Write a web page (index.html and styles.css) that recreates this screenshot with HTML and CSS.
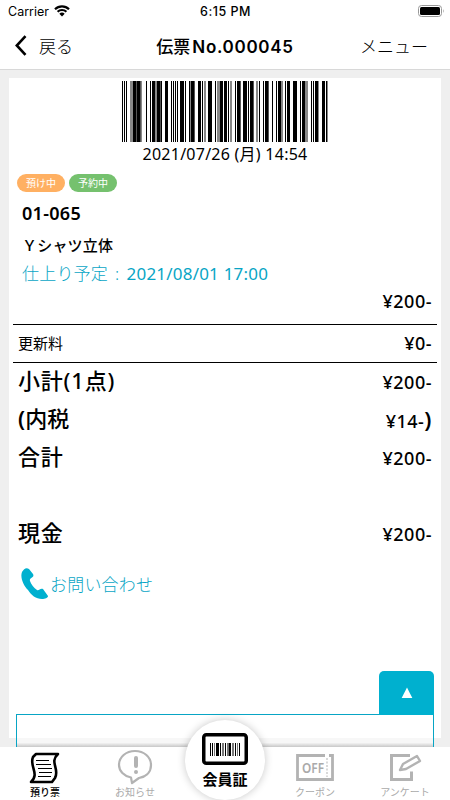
FILE: index.html
```html
<!DOCTYPE html>
<html lang="ja">
  <head>
    <meta charset="UTF-8" />
    <meta name="viewport" content="width=device-width, initial-scale=1.0" />
    <title>伝票No.000045</title>
    <link rel="stylesheet" href="styles.css">
  </head>
  <body>
    <header class="header">
      <div class="status">
        <div class="carrier">
          <span>Carrier</span>
          <svg class="wifi" viewBox="0 0 16 12">
            <path d="M1 4.2a10 10 0 0 1 14 0M3.6 6.8a6.3 6.3 0 0 1 8.8 0" fill="none" stroke="#000" stroke-width="2.2" />
            <path d="M5.3 8.8a4 4 0 0 1 5.4 0L8 11.5z" />
          </svg>
        </div>
        <div class="time">6:15 PM</div>
        <svg class="battery" viewBox="0 0 27 12">
          <rect x=".5" y=".5" width="23" height="11" rx="3" fill="none" stroke="#999" />
          <rect x="2" y="2" width="20" height="8" rx="1.5" />
          <path d="M25 4q1.5 2 0 4z" fill="#999" />
        </svg>
      </div>
      <nav class="nav">
        <a class="back">
          <svg class="chevron" viewBox="0 0 12 21"><path d="M10.5 1.2L1.8 10.5l8.7 9.3" /></svg>
          <span>戻る</span>
        </a>
        <h1 class="title">伝票<span>No.000045</span></h1>
        <a class="menu">メニュー</a>
      </nav>
    </header>

    <main class="main">
      <section class="slip">
        <svg class="barcode" viewBox="0 0 208 61" shape-rendering="crispEdges">
          <path d="M1 0h1v61h-1zM3 0h1v61h-1zM5 0h1v61h-1zM12 0h3v61h-3zM16 0h3v61h-3zM25 0h1v61h-1zM29 0h1v61h-1zM31 0h3v61h-3zM36 0h3v61h-3zM40 0h1v61h-1zM44 0h3v61h-3zM50 0h1v61h-1zM52 0h1v61h-1zM54 0h1v61h-1zM56 0h1v61h-1zM59 0h4v61h-4zM64 0h1v61h-1zM68 0h1v61h-1zM70 0h3v61h-3zM77 0h3v61h-3zM81 0h1v61h-1zM87 0h4v61h-4zM94 0h1v61h-1zM99 0h3v61h-3zM103 0h3v61h-3zM107 0h1v61h-1zM114 0h1v61h-1zM116 0h3v61h-3zM122 0h4v61h-4zM127 0h1v61h-1zM129 0h3v61h-3zM138 0h1v61h-1zM142 0h1v61h-1zM144 0h3v61h-3zM151 0h1v61h-1zM155 0h1v61h-1zM157 0h3v61h-3zM164 0h1v61h-1zM166 0h3v61h-3zM172 0h4v61h-4zM179 0h1v61h-1zM181 0h3v61h-3zM190 0h1v61h-1zM192 0h1v61h-1zM194 0h3v61h-3zM201 0h3v61h-3zM205 0h1v61h-1z" />
          <path d="M9 0h3v61h-3zM20 0h1v61h-1zM34 0h2v61h-2zM69 0h1v61h-1zM83 0h2v61h-2zM96 0h3v61h-3zM109 0h2v61h-2zM135 0h2v61h-2zM160 0h2v61h-2zM184 0h3v61h-3zM197 0h1v61h-1zM206 0h1v61h-1z" fill="#888" />
          <path d="M15 0h1v61h-1zM19 0h1v61h-1zM39 0h1v61h-1zM73 0h1v61h-1zM119 0h1v61h-1zM132 0h1v61h-1zM147 0h1v61h-1z" fill="#555" />
        </svg>
        <p class="issued">2021/07/26 (月) 14:54</p>

        <div class="badges">
          <span class="badge badge-orange">預け中</span>
          <span class="badge badge-green">予約中</span>
        </div>
        <p class="number">01-065</p>
        <p class="item">Ｙシャツ立体</p>
        <p class="due"><span class="due-label">仕上り予定 : </span>2021/08/01 17:00</p>
        <p class="price">¥200-</p>

        <div class="row row-fee">
          <span>更新料</span>
          <span class="price">¥0-</span>
        </div>
        <div class="row">
          <span class="label">小計(1点)</span>
          <span class="price">¥200-</span>
        </div>
        <div class="row">
          <span class="label label-tax"><b>(</b>内税</span>
          <span class="price">¥14-<b>)</b></span>
        </div>
        <div class="row">
          <span class="label">合計</span>
          <span class="price">¥200-</span>
        </div>
        <div class="row row-cash">
          <span class="label">現金</span>
          <span class="price">¥200-</span>
        </div>

        <a class="contact">
          <svg class="phone" viewBox="0 0 27 31">
            <path d="M1 4C3 1 5-1 8 1l4 5c2 4-4 3-3 7 1 3 4 7 7 9 2 1 3-2 6-1l5 7c0 2-3 3-6 3-6 0-11-4-14-9C2 17-1 9 1 4z" />
          </svg>
          <span>お問い合わせ</span>
        </a>
      </section>
    </main>

    <div class="drawer">
      <button class="drawer-tab">
        <svg viewBox="0 0 12 12"><path d="M6 .5l5.300 10.500H.7z" /></svg>
      </button>
    </div>

    <footer class="tabs">
      <a class="tab active">
        <svg class="icon" viewBox="0 0 38 36">
          <path d="M10 5h22c-9 8 2 15-3 24l-3 4H5c9-8-2-16 2-25z" fill="none" stroke="#000" stroke-width="2.6" stroke-linejoin="round" />
          <path d="M10 11.500h13M10 15.500h15M12 19.500h14M13 23.500h13M12 27.500h13" stroke="#000" stroke-width="1" />
        </svg>
        <span>預り票</span>
      </a>
      <a class="tab">
        <svg class="icon" viewBox="0 0 38 36">
          <path d="M15 28.5C8 27 3 22 3 16 3 8 10 2 19 2s16 6 16 14-6 12-12 13l-7 5z" fill="none" stroke="#b3b3b3" stroke-width="2.2" stroke-linejoin="round" />
          <path d="M20 9v8" stroke="#b3b3b3" stroke-width="4" stroke-linecap="round" />
          <circle cx="20" cy="23" r="2" fill="#b3b3b3" />
        </svg>
        <span>お知らせ</span>
      </a>
      <a class="card">
        <svg class="card-icon" viewBox="0 0 46 32">
          <rect x="1.75" y="1.75" width="42.5" height="28.5" rx="2.5" fill="none" stroke="#000" stroke-width="3.5" />
          <g shape-rendering="crispEdges">
            <path d="M8 10h1v13H8zM10 10h1v13h-1zM14 10h3v13h-3zM18 10h1v13h-1zM23 10h1v13h-1zM27 10h2v13h-2zM33 10h1v13h-1zM37 10h1v13h-1z" />
            <path d="M12 10h1v13h-1zM20 10h2v13h-2zM25 10h2v13h-2zM30 10h2v13h-2zM35 10h1v13h-1z" fill="#777" />
          </g>
        </svg>
        <span>会員証</span>
      </a>
      <a class="tab">
        <svg class="icon" viewBox="0 0 38 36">
          <path d="M29 6.500H1.500v24h35v-24H33" fill="none" stroke="#b3b3b3" stroke-width="2.8" />
          <path d="M31 9v19" stroke="#b3b3b3" stroke-dasharray="2 1.5" />
          <text class="off" x="6" y="23.5" textLength="22" lengthAdjust="spacingAndGlyphs">OFF</text>
        </svg>
        <span>クーポン</span>
      </a>
      <a class="tab">
        <svg class="icon" viewBox="0 0 38 36">
          <path d="M24 6.500H5.500v24h20v-8" fill="none" stroke="#b3b3b3" stroke-width="3" />
          <path d="M14 21l3-6L31 7l3 5-14 8z" fill="none" stroke="#b3b3b3" stroke-width="2.4" stroke-linejoin="round" />
        </svg>
        <span>アンケート</span>
      </a>
    </footer>
  </body>
</html>
```
FILE: styles.css
```css
* {
  box-sizing: border-box;
}
html,
body {
  height: 100%;
  margin: 0;
}
body {
  display: flex;
  flex-direction: column;
  position: relative;
  overflow: hidden;
  background: #efefef;
  color: #000;
  font-family: 'Noto Sans', 'Noto Sans CJK JP', sans-serif;
}
p,
h1 {
  margin: 0;
}
svg {
  display: block;
}
.header {
  height: 70px;
  background: #fff;
  border-bottom: 1px solid #d8d8d8;
}
.status {
  display: grid;
  grid-template-columns: 1fr 1fr 1fr;
  align-items: center;
  height: 22px;
  padding: 0 5px 0 8px;
  font: 12.5px Inter, sans-serif;
}
.carrier {
  display: flex;
  align-items: center;
  gap: 5px;
}
.wifi {
  width: 16px;
  height: 12px;
}
.time {
  margin-left: -2px;
  text-align: center;
  font-weight: 500;
  letter-spacing: 0.5px;
}
.battery {
  justify-self: end;
  width: 27px;
  height: 12px;
}
.nav {
  display: grid;
  grid-template-columns: 1fr auto 1fr;
  align-items: center;
  height: 46px;
  padding: 0 22px 0 15px;
  font-family: Inter, 'Noto Sans CJK JP', sans-serif;
  font-size: 17px;
  font-weight: 300;
}
.back {
  display: flex;
  align-items: center;
  gap: 12px;
}
.chevron {
  width: 12px;
  height: 21px;
  fill: none;
  stroke: #000;
  stroke-width: 2.6;
}
.title {
  margin-left: 7px;
  font-size: 17px;
  font-weight: 500;
}
.title span {
  margin-left: 2px;
  font-weight: 600;
  letter-spacing: 0.7px;
}
.menu {
  text-align: right;
}
.main {
  flex: 1;
  padding: 8px 9px 0;
}
.slip {
  height: 660px;
  padding: 3px 4px 0;
  background: #fff;
}
.barcode {
  width: 208px;
  height: 61px;
  margin: 0 auto;
}
.issued {
  height: 32px;
  line-height: 25px;
  text-align: center;
  font-size: 16px;
  letter-spacing: 0.25px;
}
.badges {
  display: flex;
  gap: 4px;
  padding-left: 4px;
}
.badge {
  width: 48px;
  height: 18px;
  border-radius: 9px;
  color: #fff;
  font-size: 10px;
  line-height: 18px;
  text-align: center;
}
.badge-orange {
  background: #ffb062;
}
.badge-green {
  background: #75c16e;
}
.number {
  height: 37px;
  padding-left: 9px;
  font-size: 18px;
  font-weight: 600;
  letter-spacing: 0.3px;
  line-height: 42px;
}
.item {
  height: 30px;
  padding-left: 9px;
  font-size: 15px;
  font-weight: 500;
  letter-spacing: 0.2px;
  line-height: 32px;
}
.due {
  height: 28px;
  padding-left: 9px;
  color: #08a5c5;
  font-size: 17px;
  letter-spacing: 0.2px;
  line-height: 29px;
}
.due-label {
  font-weight: 300;
  letter-spacing: 0.2px;
  word-spacing: 2.5px;
}
.price {
  padding-right: 5px;
  font-size: 18px;
  font-weight: 500;
  letter-spacing: 0.5px;
  line-height: 28px;
  text-align: right;
}
.row {
  display: flex;
  justify-content: space-between;
  align-items: center;
  height: 38px;
  padding-left: 5px;
}
.row .price {
  line-height: 27px;
}
.row b {
  font-size: 22px;
  font-weight: 600;
}
.label {
  padding-bottom: 6px;
  font-size: 22px;
  font-weight: 500;
  letter-spacing: 0.8px;
}
.label-tax {
  letter-spacing: 0;
}
.row-fee {
  height: 39px;
  margin-top: 9px;
  border: solid #000;
  border-width: 1px 0;
  font-size: 15px;
}
.row-fee span:first-child {
  padding-bottom: 2px;
}
.price + .row-fee {
  margin-top: 9px;
}
.row-cash {
  margin-top: 38px;
}
.contact {
  display: flex;
  align-items: center;
  gap: 2px;
  margin-top: 15px;
  padding-left: 8px;
  color: #08a5c5;
  font-size: 17px;
  font-weight: 300;
  letter-spacing: 0.2px;
}
.phone {
  width: 27px;
  height: 31px;
  fill: #00b0cf;
}
.drawer {
  position: absolute;
  left: 16px;
  top: 714px;
  width: 418px;
  height: 33px;
  border: 1px solid #08a5c5;
  border-bottom: 0;
  background: linear-gradient(rgba(255, 255, 255, 0.5) 86%, rgba(190, 190, 190, 0.8));
}
.drawer-tab {
  display: flex;
  justify-content: center;
  align-items: center;
  position: absolute;
  right: -1px;
  bottom: 100%;
  width: 55px;
  height: 44px;
  padding: 0;
  border: 0;
  border-radius: 5px 5px 0 0;
  background: #00b0cf;
}
.drawer-tab svg {
  width: 12px;
  height: 12px;
  fill: #fff;
}
.tabs {
  display: grid;
  grid-template-columns: repeat(5, 1fr);
  position: relative;
  height: 53px;
  background: #fff;
}
.tab {
  display: flex;
  flex-direction: column;
  align-items: center;
  padding-top: 2px;
  color: #aaa;
  font-size: 10px;
  line-height: 14px;
  white-space: nowrap;
}
.active {
  color: #000;
  font-weight: 500;
}
.icon {
  width: 38px;
  height: 36px;
}
.off {
  fill: #aaa;
  font-size: 14px;
  font-weight: 600;
}
.card {
  display: flex;
  flex-direction: column;
  align-items: center;
  justify-self: center;
  width: 80px;
  height: 80px;
  margin-top: -27px;
  padding-top: 13px;
  border-radius: 50%;
  background: #fff;
  box-shadow: 0 0 9px rgba(0, 0, 0, 0.22);
  font-size: 15px;
  font-weight: 600;
  line-height: 28px;
}
.card-icon {
  flex: none;
  width: 46px;
  height: 32px;
}
```
